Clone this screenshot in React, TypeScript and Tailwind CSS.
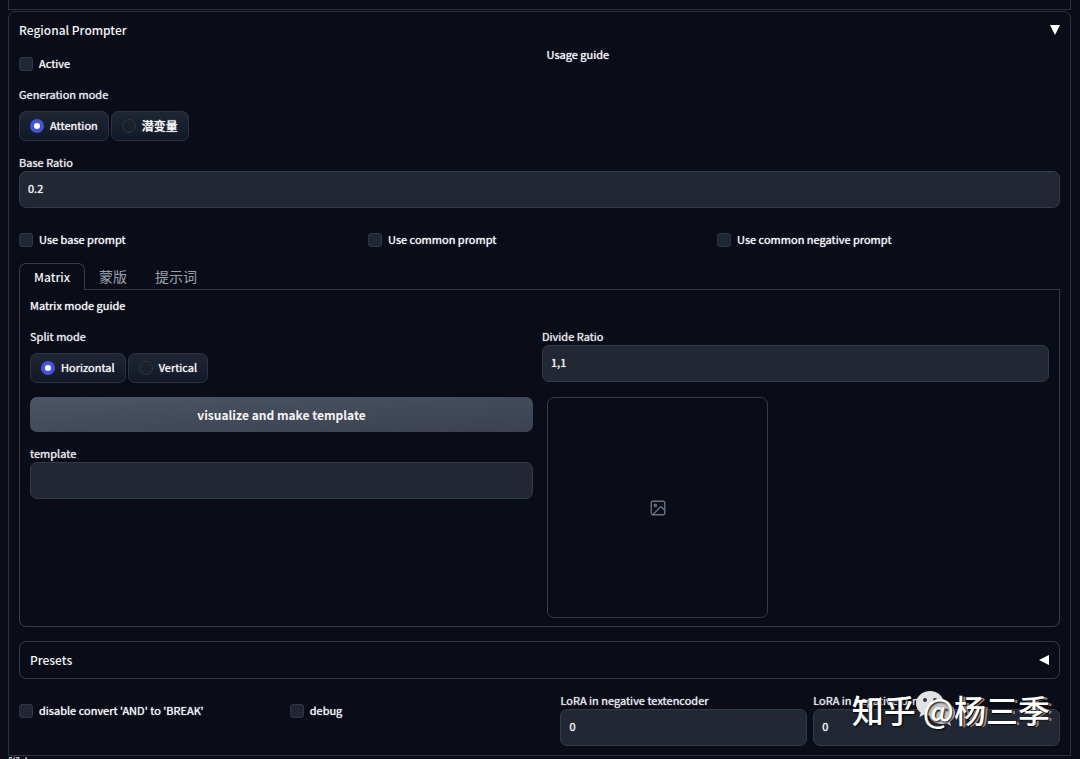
import { useId, useState, type ReactNode } from "react";

function Check({ label }: { label: string }) {
  return (
    <label className="flex items-center gap-[6px] text-[11px] leading-[14px] text-gray-100 [text-shadow:0_0_1px]">
      <input
        type="checkbox"
        className="size-[14px] shrink-0 appearance-none rounded-[3px] border border-[#303744] bg-[#1f2733] checked:bg-indigo-500"
      />
      <span className="pb-[2px]">{label}</span>
    </label>
  );
}

function RadioGroup({ legend, name, options }: { legend: string; name: string; options: string[] }) {
  const [value, setValue] = useState(options[0]);
  return (
    <fieldset>
      <legend className="pb-[2px] text-[11px] leading-[14px] text-gray-200 [text-shadow:0_0_1px]">{legend}</legend>
      <div className="mt-2 flex gap-[2px]">
        {options.map((option) => (
          <label
            key={option}
            className="flex h-[30px] items-center gap-[6px] rounded-[7px] border border-[#2c3340] bg-linear-to-t from-[#111827] to-[#1f2733] px-[10px] text-[11px] leading-[14px] text-gray-100 [text-shadow:0_0_1px]"
          >
            <input
              type="radio"
              name={name}
              checked={value === option}
              onChange={() => setValue(option)}
              className="size-[14px] shrink-0 appearance-none rounded-full border border-[#2f3542] bg-[#1a202c] checked:border-[4px] checked:border-[#4355d6] checked:bg-white"
            />
            <span className={/[a-z]/i.test(option) ? "pb-[2px]" : "text-xs leading-[14px] font-medium"}>{option}</span>
          </label>
        ))}
      </div>
    </fieldset>
  );
}

function Field({ label, value }: { label: string; value: string }) {
  const id = useId();
  return (
    <div className="flex min-w-0 flex-col">
      <label htmlFor={id} className="pb-[2px] text-[11px] leading-[14px] whitespace-nowrap text-gray-200 [text-shadow:0_0_1px]">
        {label}
      </label>
      <input
        id={id}
        type="text"
        defaultValue={value}
        className="h-[37px] w-full rounded-[7px] border border-[#343b48] bg-[#212733] px-2 pb-[3px] text-[11px] text-gray-100 outline-none [text-shadow:0_0_1px]"
      />
    </div>
  );
}

function Tab({ children, active, onClick }: { children: ReactNode; active: boolean; onClick: () => void }) {
  return (
    <button
      type="button"
      role="tab"
      aria-selected={active}
      onClick={onClick}
      className={
        active
          ? "-mb-px h-[27px] rounded-t-[7px] border border-b-0 border-[#343b48] bg-[#0a0d18] px-[14px] text-xs font-medium text-gray-100"
          : "h-[26px] px-[14px] text-sm leading-5 text-gray-400"
      }
    >
      {children}
    </button>
  );
}

function ImageIcon() {
  return (
    <svg className="size-[18px] text-gray-500" viewBox="0 0 24 24" fill="none" stroke="currentColor" strokeWidth="1.8" strokeLinecap="round" strokeLinejoin="round" aria-hidden="true">
      <rect x="3" y="3" width="18" height="18" rx="2" />
      <circle cx="8.5" cy="8.5" r="1.5" />
      <polyline points="21 15 16 10 5 21" />
    </svg>
  );
}

function Watermark() {
  return (
    <div className="pointer-events-none absolute right-[20px] bottom-[26px] text-[32px] leading-10 font-medium text-white [text-shadow:1px_1px_2px_#000]">
      <svg className="absolute top-0 left-[62px] h-[40px] w-[44px]" viewBox="0 0 44 40" aria-hidden="true">
        <path fill="#e2e2e4" d="M16 2C8.500 2 2 7.500 2 14.500c0 3.700 1.800 7 4.700 9.200L5.500 28l4.700-2.400c1.800.6 3.700.9 5.800.9 7.800 0 14-5.400 14-12S23.800 2 16 2z" />
        <path fill="#c6c7ca" d="M28 13c-7.400 0-13 4.900-13 11s5.600 11 13 11c1.700 0 3.300-.3 4.800-.8L37 37l-1.100-4.300C39 30.700 41 27.600 41 24c0-6.100-5.600-11-13-11z" />
        <circle cx="11" cy="11" r="2" fill="#30343d" />
        <circle cx="21" cy="11" r="2" fill="#30343d" />
        <circle cx="24" cy="21" r="1.500" fill="#555962" />
        <circle cx="33" cy="21" r="1.500" fill="#555962" />
      </svg>
      <span className="relative">
        知乎 @<span className="[text-shadow:1px_1px_1px_#000,3px_1px_0_#8d8f95]">杨三季</span>
      </span>
    </div>
  );
}

export default function App() {
  const [tab, setTab] = useState(0);
  return (
    <div className="min-h-screen overflow-hidden bg-[#0a0d18] px-2 font-['Noto_Sans_CJK_SC',sans-serif] text-gray-100">
      <div className="mr-px h-[10px] border border-t-0 border-[#2c323e]" />
      <main className="relative mt-px mr-px rounded-t-[7px] border border-[#2c323e] px-[10px] pb-[9px]">
        <button type="button" className="mt-2 flex w-full items-center justify-between text-xs leading-5 font-medium">
          Regional Prompter
          <svg className="size-[10px]" viewBox="0 0 10 10" fill="white" aria-hidden="true"><path d="M0 0h10L5 10z" /></svg>
        </button>
        <div className="mt-[6px] grid grid-cols-2 gap-[14px]">
          <div className="pt-[10px]"><Check label="Active" /></div>
          <a href="#usage" className="text-[11px] leading-4 [text-shadow:0_0_1px]">Usage guide</a>
        </div>
        <div className="mt-[15px]"><RadioGroup legend="Generation mode" name="generation" options={["Attention", "潜变量"]} /></div>
        <div className="mt-[14px]"><Field label="Base Ratio" value="0.2" /></div>
        <div className="mt-6 grid grid-cols-3 gap-[6px]">
          <Check label="Use base prompt" />
          <Check label="Use common prompt" />
          <Check label="Use common negative prompt" />
        </div>
        <div role="tablist" className="mt-[15px] flex items-end border-b border-[#343b48]">
          {["Matrix", "蒙版", "提示词"].map((name, i) => (
            <Tab key={name} active={tab === i} onClick={() => setTab(i)}>{name}</Tab>
          ))}
        </div>
        <section className="rounded-b-[7px] border border-t-0 border-[#343b48] px-[10px] pt-[7px] pb-2">
          <a href="#matrix" className="block text-[11px] leading-4 [text-shadow:0_0_1px]">Matrix mode guide</a>
          <div className="mt-4 grid grid-cols-[503fr_507fr] gap-[9px]">
            <RadioGroup legend="Split mode" name="split" options={["Horizontal", "Vertical"]} />
            <Field label="Divide Ratio" value="1,1" />
          </div>
          <div className="mt-[14px] grid grid-cols-[503fr_502fr] items-start gap-[14px]">
            <div>
              <button type="button" className="mb-[14px] h-[35px] w-full rounded-[7px] bg-linear-to-br from-[#4b5563] to-[#3b4150] text-xs font-bold">
                visualize and make template
              </button>
              <Field label="template" value="" />
            </div>
            <div className="flex h-[221px] w-[221px] items-center justify-center rounded-[7px] border border-[#343b48]">
              <ImageIcon />
            </div>
          </div>
        </section>
        <button type="button" className="mt-[14px] flex h-[38px] w-full items-center justify-between rounded-[7px] border border-[#343b48] px-[10px] text-xs font-medium">
          Presets
          <svg className="size-[10px]" viewBox="0 0 10 10" fill="white" aria-hidden="true"><path d="M10 0v10L0 5z" /></svg>
        </button>
        <div className="mt-[14px] grid grid-cols-[265fr_265fr_247fr_247fr] gap-[6px]">
          <div className="pt-[10px]"><Check label="disable convert 'AND' to 'BREAK'" /></div>
          <div className="pt-[10px]"><Check label="debug" /></div>
          <Field label="LoRA in negative textencoder" value="0" />
          <Field label="LoRA in negative U-net" value="0" />
        </div>
        <Watermark />
      </main>
      <p className="h-1 overflow-hidden text-xs leading-[14px]">脚本</p>
    </div>
  );
}
